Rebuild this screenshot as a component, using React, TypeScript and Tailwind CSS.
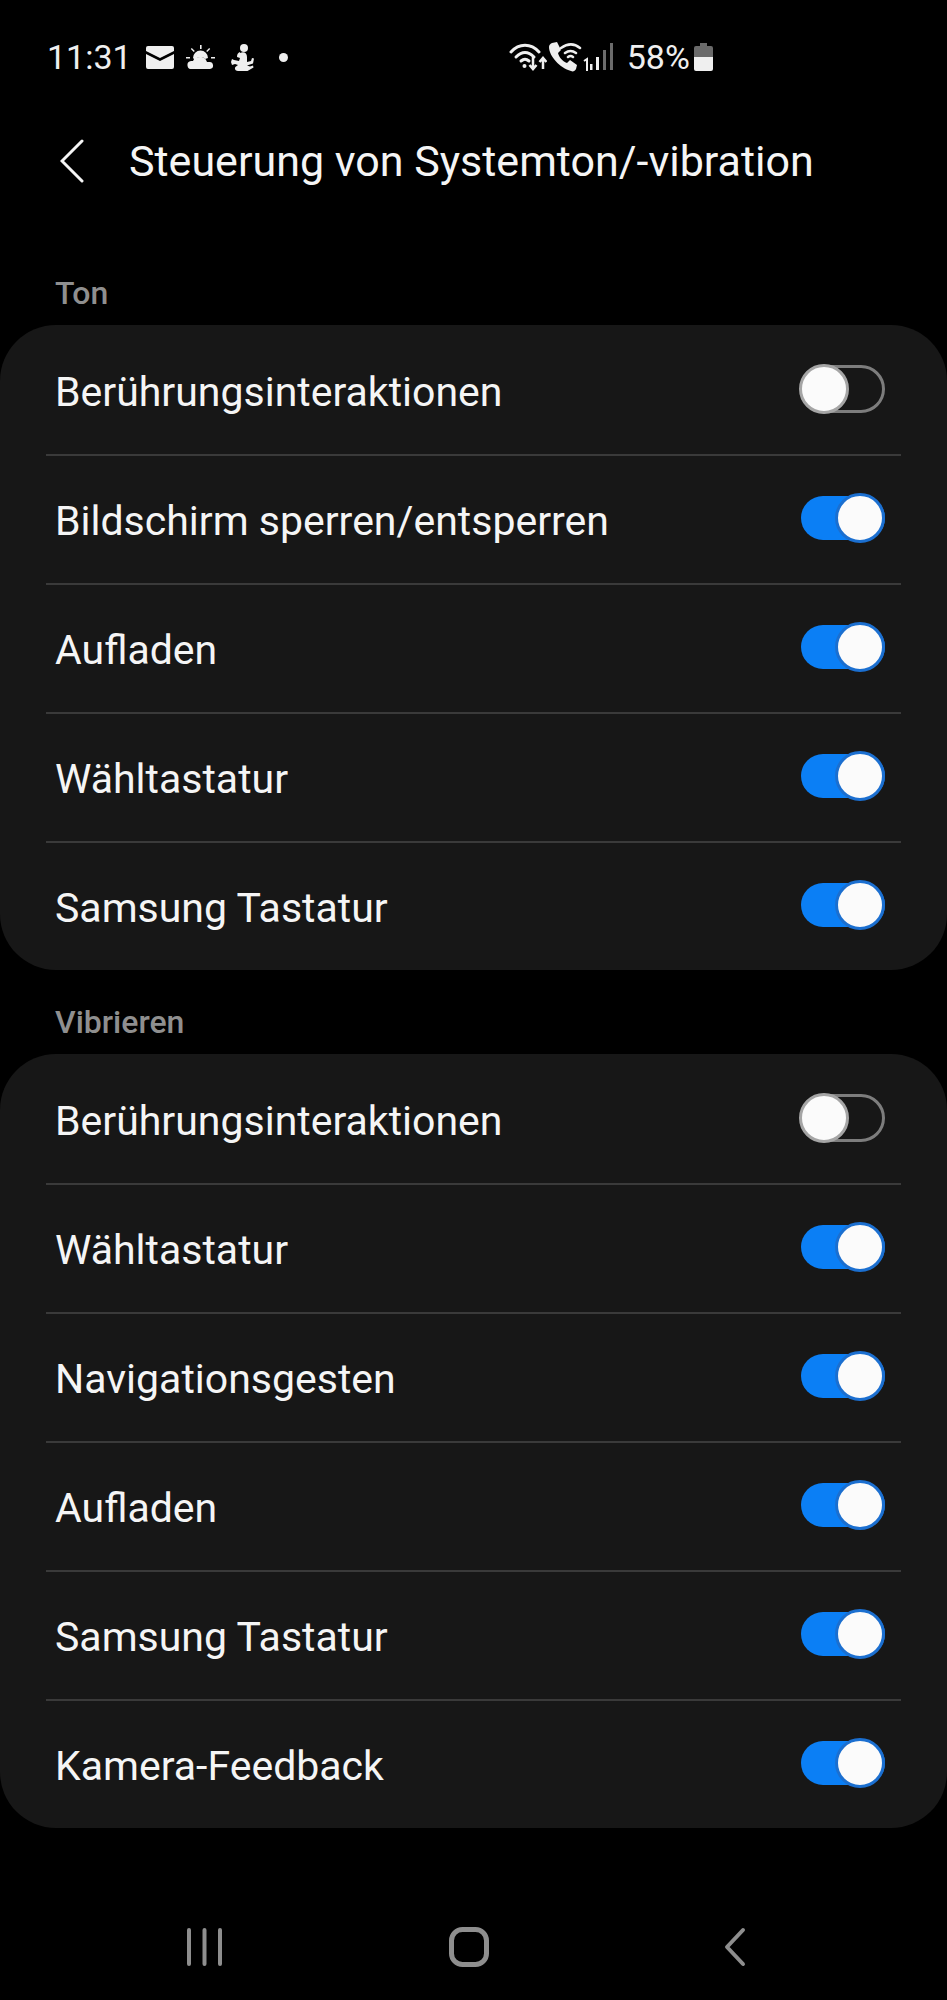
import React from "react";

function Toggle({ on }: { on: boolean }) {
  if (on) {
    return (
      <div className="relative -mt-[2px] h-[44px] w-[84px] rounded-full bg-[#0b7ff5]">
        <span className="absolute right-0 top-[-3px] size-[50px] rounded-full border-[3px] border-[#1b6fd0] bg-[#fbfbfb]" />
      </div>
    );
  }
  return (
    <div className="relative -mt-[2px] h-[48px] w-[84px] rounded-full border-[3px] border-[#7d7d7d]">
      <span className="absolute left-[-5px] top-[-4px] size-[50px] rounded-full border-[3px] border-[#a5a5a5] bg-[#fbfbfb]" />
    </div>
  );
}

function Row({ label, on, last }: { label: string; on: boolean; last?: boolean }) {
  return (
    <div className="relative flex h-[129px] items-center justify-between pl-[55px] pr-[62px]">
      <span className="pt-[6px] text-[41px] leading-none text-[#f5f5f5]">{label}</span>
      <Toggle on={on} />
      {!last && <div className="absolute -bottom-[2px] left-[46px] right-[46px] h-[2px] bg-[#3a3a3a]" />}
    </div>
  );
}

function Section({ title, rows }: { title: string; rows: [string, boolean][] }) {
  return (
    <section>
      <div className="flex h-[63px] items-center pb-[1px] pl-[55px] text-[32px] font-medium leading-none text-[#8f8f8f]">{title}</div>
      <div className="rounded-[56px] bg-[#171717]">
        {rows.map(([label, on], i) => (
          <Row key={label} label={label} on={on} last={i === rows.length - 1} />
        ))}
      </div>
    </section>
  );
}

function StatusLeftIcons() {
  return (
    <div className="ml-[14px] flex items-center">
      <svg width="28" height="23" viewBox="0 0 28 23" fill="#efefef">
        <path d="M2 0h24a2 2 0 0 1 2 2v3L14 12 0 5V2a2 2 0 0 1 2-2z" />
        <path d="M0 8l14 7 14-7v13a2 2 0 0 1-2 2H2a2 2 0 0 1-2-2z" />
      </svg>
      <svg className="ml-[12px]" width="29" height="24" viewBox="0 0 29 24" fill="#efefef">
        <path d="M7 13a7.5 7.5 0 0 1 15 0l-3 1a5 5 0 0 0-4-2c-3 0-5 1-6 3z" />
        <path d="M6 24a4 4 0 0 1-1-8h2c1-3 4-4 7-4 4 0 6 2 7 5h2a3.5 3.5 0 0 1 1 7z" />
        <path d="M14 0h1.600v4H14zM5.800 3l3 3-1 1-3-3zM23.200 3l1 1-3 3-1-1zM0 12h4v1.600H0zM25 12h4v1.600h-4z" />
      </svg>
      <svg className="ml-[16px]" width="24" height="27" viewBox="0 0 24 27" fill="#efefef">
        <circle cx="13" cy="4" r="4" />
        <path d="M9 9c4-2 7 0 7 4v5l4-1 1-3 2 .5-1 5-6 2 3 1 3-1 .5 2-6 3.500H7c-3 0-4-3-2-4.500l2-1.500-3-1-3 1L0 18l1-3 2 1 5 1 1-3-3-1c0-3 1-4 3-5z" />
      </svg>
      <span className="ml-[24px] size-[9px] rounded-full bg-[#efefef]" />
    </div>
  );
}

function StatusRightIcons() {
  return (
    <div className="flex items-center">
      <svg width="38" height="30" viewBox="0 0 38 30" fill="none" stroke="#efefef">
        <path d="M2 10C10 1 22 1 30 10" strokeWidth="3" strokeLinecap="round" />
        <path d="M7 15c6-6 12-6 18 0" strokeWidth="3" strokeLinecap="round" />
        <path d="M12 19c3-2.500 5-2.500 8 0" strokeWidth="3" strokeLinecap="round" />
        <circle cx="15.500" cy="24" r="2" fill="#efefef" stroke="none" />
        <path d="M24 15v11M20.500 23l3.500 4 3.500-4" strokeWidth="2.500" />
        <path d="M34 27V16M30.500 20l3.500-4 3.500 4" strokeWidth="2.500" />
      </svg>
      <svg className="ml-[1px]" width="41" height="30" viewBox="0 0 41 30" fill="none">
        <path d="M4 1l5-1 4 8-3 3c1 4 4 8 9 10l3-3 7 5-1 4c-1 2-3 3-5 2C12 26 1 14 1 5c0-2 1-3 3-4z" fill="#efefef" />
        <path d="M13 6c7-5 13-5 19 0M17 11c4-3 7-3 11 0M20 15c2-1.500 3-1.500 5 0" stroke="#efefef" strokeWidth="2.500" strokeLinecap="round" />
        <path d="M36 19l3-2v12" stroke="#efefef" strokeWidth="2" />
      </svg>
      <svg className="ml-[1px]" width="23" height="28" viewBox="0 0 23 28">
        <rect x="0" y="21" width="2.500" height="6" fill="#efefef" />
        <rect x="6" y="14" width="3" height="13" fill="#efefef" />
        <rect x="13" y="7" width="3" height="20" fill="#6b6b6b" />
        <rect x="20" y="0" width="3" height="27" fill="#6b6b6b" />
      </svg>
      <span className="ml-[14px] text-[34px] leading-none text-[#efefef]">58%</span>
      <svg className="ml-[4px]" width="19" height="28" viewBox="0 0 19 28">
        <path d="M6 0h7v3h4a2 2 0 0 1 2 2v9H0V5a2 2 0 0 1 2-2h4z" fill="#6a6a6a" />
        <path d="M0 14h19v12a2 2 0 0 1-2 2H2a2 2 0 0 1-2-2z" fill="#efefef" />
      </svg>
    </div>
  );
}

const tonRows: [string, boolean][] = [
  ["Berührungsinteraktionen", false],
  ["Bildschirm sperren/entsperren", true],
  ["Aufladen", true],
  ["Wähltastatur", true],
  ["Samsung Tastatur", true],
];

const vibrationRows: [string, boolean][] = [
  ["Berührungsinteraktionen", false],
  ["Wähltastatur", true],
  ["Navigationsgesten", true],
  ["Aufladen", true],
  ["Samsung Tastatur", true],
  ["Kamera-Feedback", true],
];

export default function App() {
  return (
    <div className="flex h-[2000px] w-[947px] flex-col overflow-hidden bg-black font-['Roboto',sans-serif] text-white">
      <div className="flex h-[115px] items-center pb-[1px]">
        <div className="flex items-center pl-[47px]">
          <span className="text-[34px] leading-none text-[#efefef]">11:31</span>
          <StatusLeftIcons />
        </div>
        <div className="ml-[221px]">
          <StatusRightIcons />
        </div>
      </div>

      <header className="flex h-[92px] items-center pl-[60px]">
        <svg width="24" height="44" viewBox="0 0 24 44" fill="none" stroke="#f5f5f5" strokeWidth="3" strokeLinecap="round">
          <path d="M22 2L2 22l20 20" />
        </svg>
        <h1 className="ml-[45px] text-[43px] font-normal leading-none text-[#f5f5f5]">Steuerung von Systemton/-vibration</h1>
      </header>

      <div className="mt-[55px]">
        <Section title="Ton" rows={tonRows} />
      </div>
      <div className="mt-[21px]">
        <Section title="Vibrieren" rows={vibrationRows} />
      </div>

      <nav className="mt-[99px] flex items-center">
        <svg className="ml-[185px]" width="37" height="40" viewBox="0 0 37 40" fill="none" stroke="#8e8e8e" strokeWidth="4" strokeLinecap="round">
          <path d="M4 3v34M19.500 3v34M35 3v34" />
        </svg>
        <svg className="ml-[227px]" width="40" height="40" viewBox="0 0 40 40" fill="none" stroke="#8e8e8e" strokeWidth="5">
          <rect x="2.500" y="2.500" width="35" height="35" rx="11" />
        </svg>
        <svg className="ml-[235px]" width="22" height="40" viewBox="0 0 22 40" fill="none" stroke="#8e8e8e" strokeWidth="4" strokeLinecap="round" strokeLinejoin="round">
          <path d="M19 3L3 20l16 17" />
        </svg>
      </nav>
    </div>
  );
}
